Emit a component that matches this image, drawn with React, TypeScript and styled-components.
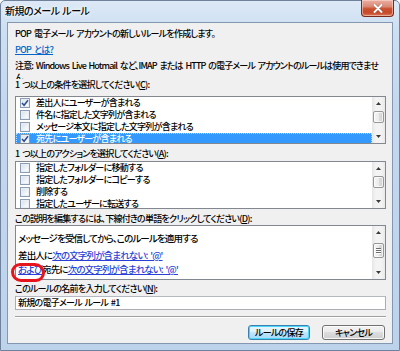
import React from "react";
import styled, { createGlobalStyle } from "styled-components";

const Global = createGlobalStyle`
  html, body { margin: 0; padding: 0; background: #ffffff; }
  body {
    width: 400px; height: 351px; overflow: hidden;
    font-family: "Noto Sans CJK JP", "Noto Sans", sans-serif;
    font-feature-settings: "palt";
  }
`;

const Window = styled.div`
  width: 400px;
  height: 351px;
  box-sizing: border-box;
  display: flex;
  flex-direction: column;
  border: 1px solid #6f819b;
  border-radius: 5px 5px 0 0;
  padding: 0 6px 6px 6px;
  background: linear-gradient(180deg, #dde9f6 0%, #cddff2 8%, #c3d8ef 30%, #bdd3ec 100%);
`;

const TitleBar = styled.div`
  height: 21px;
  margin: 0 -6px;
  padding: 0 5px 0 4px;
  display: flex;
  justify-content: space-between;
  align-items: flex-start;
  flex: none;
`;

const TitleText = styled.div`
  font-size: 10px;
  font-weight: 500;
  line-height: 12px;
  letter-spacing: -0.5px;
  word-spacing: 1px;
  padding-top: 4px;
  color: #000;
  text-shadow: 0 0 5px #ffffff, 0 0 3px #ffffff;
`;

const CloseButton = styled.div`
  width: 33px;
  height: 17px;
  margin-top: -1px;
  box-sizing: border-box;
  border: 1px solid #7a2a1c;
  border-top: none;
  border-radius: 0 0 4px 4px;
  background: linear-gradient(180deg, #eab0a3 0%, #db8a77 40%, #c9502f 55%, #c74a2a 80%, #d77a5a 100%);
  box-shadow: inset 0 0 0 1px rgba(255, 220, 210, 0.55);
  display: flex;
  align-items: center;
  justify-content: center;
`;

const Client = styled.div`
  flex: 1;
  display: flex;
  flex-direction: column;
  background: #f0f0f0;
  border: 1px solid #8498b2;
  padding: 0 6px 0 7px;
  font-size: 9px;
  font-weight: 500;
  letter-spacing: -0.75px;
  word-spacing: 1.5px;
  line-height: 12px;
  color: #000;
`;

const Para = styled.div<{ $mt: number }>`
  margin-top: ${(p) => p.$mt}px;
  white-space: nowrap;
`;

const Link = styled.a`
  color: #0066cc;
  text-decoration: underline;
  cursor: pointer;
`;

const Note = styled.div`
  margin-top: 4px;
  height: 19px;
  overflow: hidden;
  white-space: nowrap;
  letter-spacing: -0.85px;
`;

const Label = styled.div<{ $mt: number }>`
  margin-top: ${(p) => p.$mt}px;
  white-space: nowrap;
  u { text-decoration: underline; }
`;

const ListBox = styled.div<{ $mt: number }>`
  margin-top: ${(p) => p.$mt}px;
  height: 48px;
  box-sizing: border-box;
  border: 1px solid #828790;
  background: #ffffff;
  display: flex;
  overflow: hidden;
`;

const ListItems = styled.div`
  flex: 1;
  display: flex;
  flex-direction: column;
  overflow: hidden;
`;

const Row = styled.div<{ $selected?: boolean }>`
  height: 12px;
  flex: none;
  display: flex;
  align-items: center;
  gap: 6px;
  padding-left: 4px;
  box-sizing: border-box;
  white-space: nowrap;
  background: ${(p) => (p.$selected ? "#3399ff" : "transparent")};
  color: ${(p) => (p.$selected ? "#ffffff" : "#000000")};
  outline: ${(p) => (p.$selected ? "1px dotted #b8dcff" : "none")};
  outline-offset: -1px;
`;

const CheckBox = styled.span`
  width: 10px;
  height: 10px;
  flex: none;
  box-sizing: border-box;
  border: 1px solid #8a9db3;
  background: linear-gradient(135deg, #d6dee8 0%, #f0f4f8 60%, #ffffff 100%);
  box-shadow: inset 0 0 0 1px #e9eef4;
  display: flex;
  align-items: center;
  justify-content: center;
`;

const ScrollBar = styled.div`
  width: 13px;
  flex: none;
  display: flex;
  flex-direction: column;
  background: linear-gradient(90deg, #e6e6e6 0%, #f3f3f3 30%, #f3f3f3 70%, #e9e9e9 100%);
`;

const ScrollArrow = styled.div`
  height: 13px;
  flex: none;
  display: flex;
  align-items: center;
  justify-content: center;
`;

const ScrollTrack = styled.div<{ $offset: number }>`
  flex: 1;
  display: flex;
  flex-direction: column;
  align-items: center;
  padding-top: ${(p) => p.$offset}px;
`;

const Thumb = styled.div<{ $h: number }>`
  width: 11px;
  height: ${(p) => p.$h}px;
  box-sizing: border-box;
  border: 1px solid #979797;
  border-radius: 2px;
  background: linear-gradient(90deg, #f5f5f5 0%, #ececec 50%, #dedede 51%, #d2d2d2 100%);
  box-shadow: inset 0 0 0 1px rgba(255, 255, 255, 0.7);
  display: flex;
  flex-direction: column;
  align-items: center;
  justify-content: center;
  gap: 1px;
`;

const Grip = styled.span`
  width: 5px;
  height: 1px;
  background: #6d6d6d;
  box-shadow: 0 1px 0 #ffffff;
`;

const DescWrap = styled.div`
  position: relative;
`;

const DescBox = styled.div`
  height: 55px;
  box-sizing: border-box;
  border: 1px solid #828790;
  background: #ffffff;
  display: flex;
`;

const DescText = styled.div`
  flex: 1;
  padding: 5px 0 0 2px;
  font-size: 9.5px;
  letter-spacing: -0.85px;
  line-height: 14px;
  white-space: nowrap;
  overflow: hidden;
`;

const DescLine = styled.div<{ $mt: number }>`
  margin-top: ${(p) => p.$mt}px;
`;

const RuleLink = styled.a`
  color: #2a3fd8;
  text-decoration: underline;
  cursor: pointer;
`;

const RedMark = styled.div`
  position: absolute;
  left: -4px;
  top: 38px;
  width: 34px;
  height: 19px;
  box-sizing: border-box;
  border: 3px solid #e8141c;
  border-radius: 9px 10px 9px 10px;
  pointer-events: none;
`;

const NameInput = styled.div`
  margin-top: 1px;
  height: 14px;
  box-sizing: border-box;
  border: 1px solid #abadb3;
  border-top-color: #b5b8c0;
  background: #ffffff;
  padding-left: 2px;
  line-height: 12px;
  white-space: nowrap;
`;

const Separator = styled.div`
  margin-top: 6px;
  height: 1px;
  background: #a0a0a0;
  box-shadow: 0 1px 0 #ffffff;
`;

const ButtonRow = styled.div`
  margin-top: 8px;
  display: flex;
  justify-content: flex-end;
  gap: 12px;
  padding-right: 1px;
`;

const Button = styled.div<{ $default?: boolean; $w: number }>`
  width: ${(p) => p.$w}px;
  height: 15px;
  box-sizing: border-box;
  border: 1px solid ${(p) => (p.$default ? "#3c7fb1" : "#707070")};
  border-radius: 3px;
  background: ${(p) =>
    p.$default
      ? "linear-gradient(180deg, #eaf6fd 0%, #d9f0fc 49%, #bee6fd 50%, #a7d9f5 100%)"
      : "linear-gradient(180deg, #f2f2f2 0%, #ebebeb 49%, #dddddd 50%, #cfcfcf 100%)"};
  box-shadow: inset 0 0 0 1px ${(p) => (p.$default ? "#48d8f8" : "rgba(255,255,255,0.8)")};
  display: flex;
  align-items: center;
  justify-content: center;
  line-height: 12px;
  color: #000;
`;

const ArrowUp = () => (
  <svg width="5" height="3" viewBox="0 0 5 3">
    <path d="M0 3 L2.5 0 L5 3 Z" fill="#3a3a3a" />
  </svg>
);

const ArrowDown = () => (
  <svg width="5" height="3" viewBox="0 0 5 3">
    <path d="M0 0 L2.5 3 L5 0 Z" fill="#3a3a3a" />
  </svg>
);

const CheckMark = () => (
  <svg width="8" height="8" viewBox="0 0 8 8">
    <path d="M1 4 L3.1 6.3 L7 1.3" fill="none" stroke="#2a4c8f" strokeWidth="1.5" />
  </svg>
);

const Scroll = ({ offset, h, grip }: { offset: number; h: number; grip?: boolean }) => (
  <ScrollBar>
    <ScrollArrow>
      <ArrowUp />
    </ScrollArrow>
    <ScrollTrack $offset={offset}>
      <Thumb $h={h}>
        {grip && (
          <>
            <Grip />
            <Grip />
            <Grip />
          </>
        )}
      </Thumb>
    </ScrollTrack>
    <ScrollArrow>
      <ArrowDown />
    </ScrollArrow>
  </ScrollBar>
);

type Item = { text: string; checked?: boolean; selected?: boolean };

const conditions: Item[] = [
  { text: "差出人にユーザーが含まれる", checked: true },
  { text: "件名に指定した文字列が含まれる" },
  { text: "メッセージ本文に指定した文字列が含まれる" },
  { text: "宛先にユーザーが含まれる", checked: true, selected: true },
];

const actions: Item[] = [
  { text: "指定したフォルダーに移動する" },
  { text: "指定したフォルダーにコピーする" },
  { text: "削除する" },
  { text: "指定したユーザーに転送する" },
];

const List = ({ items, mt }: { items: Item[]; mt: number }) => (
  <ListBox $mt={mt}>
    <ListItems>
      {items.map((it) => (
        <Row key={it.text} $selected={it.selected}>
          <CheckBox>{it.checked && <CheckMark />}</CheckBox>
          <span>{it.text}</span>
        </Row>
      ))}
    </ListItems>
    <Scroll offset={1} h={12} />
  </ListBox>
);

export default function App() {
  return (
    <>
      <Global />
      <Window>
        <TitleBar>
          <TitleText>新規のメール ルール</TitleText>
          <CloseButton>
            <svg width="10" height="9" viewBox="0 0 10 9">
              <path d="M1.5 1 L8.5 8 M8.5 1 L1.5 8" stroke="#5a1a10" strokeWidth="3" strokeLinecap="round" opacity="0.35" />
              <path d="M1.5 1 L8.5 8 M8.5 1 L1.5 8" stroke="#ffffff" strokeWidth="2" strokeLinecap="round" />
            </svg>
          </CloseButton>
        </TitleBar>
        <Client>
          <Para $mt={5}>POP 電子メール アカウントの新しいルールを作成します。</Para>
          <Para $mt={4}>
            <Link>POP とは?</Link>
          </Para>
          <Note>
            注意: Windows Live Hotmail など、IMAP または HTTP の電子メール アカウントのルールは使用できませ
            <br />
            ん。
          </Note>
          <Label $mt={0}>
            1 つ以上の条件を選択してください(<u>C</u>):
          </Label>
          <List items={conditions} mt={5} />
          <Label $mt={4}>
            1 つ以上のアクションを選択してください(<u>A</u>):
          </Label>
          <List items={actions} mt={1} />
          <Label $mt={4}>
            この説明を編集するには、下線付きの単語をクリックしてください(<u>D</u>):
          </Label>
          <DescWrap>
            <DescBox>
              <DescText>
                <DescLine $mt={0}>メッセージを受信してから、このルールを適用する</DescLine>
                <DescLine $mt={3}>
                  差出人に<RuleLink>次の文字列が含まれない: '@'</RuleLink>
                </DescLine>
                <DescLine $mt={0}>
                  <RuleLink>および</RuleLink>宛先に<RuleLink>次の文字列が含まれない: '@'</RuleLink>
                </DescLine>
              </DescText>
              <ScrollBar>
                <ScrollArrow>
                  <ArrowUp />
                </ScrollArrow>
                <ScrollTrack $offset={4}>
                  <Thumb $h={15}>
                    <Grip />
                    <Grip />
                    <Grip />
                  </Thumb>
                </ScrollTrack>
                <ScrollArrow>
                  <ArrowDown />
                </ScrollArrow>
              </ScrollBar>
            </DescBox>
            <RedMark />
          </DescWrap>
          <Label $mt={3}>
            このルールの名前を入力してください(<u>N</u>):
          </Label>
          <NameInput>新規の電子メール ルール #1</NameInput>
          <Separator />
          <ButtonRow>
            <Button $default $w={62}>ルールの保存</Button>
            <Button $w={63}>キャンセル</Button>
          </ButtonRow>
        </Client>
      </Window>
    </>
  );
}
